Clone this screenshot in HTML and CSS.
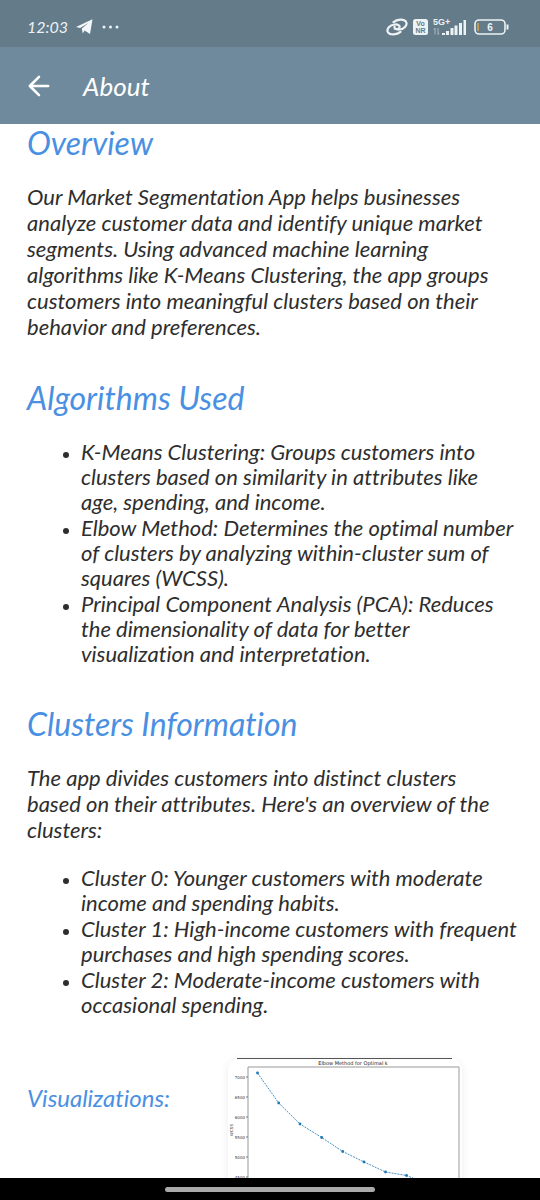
FILE: index.html
```html
<!DOCTYPE html>
<html lang="en">
<head>
<meta charset="utf-8">
<meta name="viewport" content="width=device-width, initial-scale=1">
<title>About</title>
<link rel="stylesheet" href="styles.css">
</head>
<body>
<div class="screen">
  <div class="status-bar">
    <span class="clock">12:03</span>
    <svg class="telegram" width="17" height="16" viewBox="0 0 17 16" aria-hidden="true"><path d="M0 8 16.500 0.300 14 15 8.600 11.500 6.800 14.500 5.800 9.600 12.500 4 4 9Z" fill="#f3f7f9"/></svg>
    <svg class="more" width="17" height="4" viewBox="0 0 17 4" aria-hidden="true"><g fill="#edf2f4"><circle cx="2" cy="2" r="1.500"/><circle cx="8.500" cy="2" r="1.500"/><circle cx="15" cy="2" r="1.500"/></g></svg>
    <div class="indicators">
      <svg width="22" height="18" viewBox="0 0 22 18" aria-hidden="true"><g fill="none" stroke="#edf2f4" stroke-width="2.200" stroke-linecap="round"><path d="M14.500 13.800C11 16.800 4 17.300 2 14.300 0 11 4 7 8.500 6.500 12 6.100 14 7.500 13.500 9.300 13 10.700 10.500 11.200 9 10.800"/><path d="M7.500 4.200C11 1.200 18 .7 20 3.700 22 7 18 11 13.500 11.500 10 11.900 8 10.500 8.500 8.700"/></g></svg>
      <svg width="15" height="16" viewBox="0 0 15 16" aria-hidden="true"><rect width="15" height="16" rx="2.500" fill="#edf2f4"/><g class="vonr" text-anchor="middle"><text x="7.500" y="7.400">Vo</text><text x="7.500" y="13.800">NR</text></g></svg>
      <svg width="34" height="20" viewBox="0 0 34 20" aria-hidden="true"><text class="network" x="0" y="8">5G+</text><g fill="#edf2f4"><path d="M9 16h3v2H9zM13 14h3v4h-3zM17.500 11h3v7h-3zM21.500 8.500h3V18h-3zM26 6h3v12h-3zM30.500 3h2.500v15h-2.500z"/></g><path d="M2 17.500V11L.8 12.500M5 11v6.500L6.200 16" fill="none" stroke="#a9b9c2"/></svg>
      <svg class="battery" width="35" height="16" viewBox="0 0 35 16" aria-hidden="true"><rect x="1" y="1" width="30" height="14" rx="4" fill="none" stroke="#edf2f4" stroke-width="1.600"/><path d="M32.500 5.500h2v5h-2z" fill="#edf2f4"/><path d="M4 4v8" stroke="#c49a4a" stroke-width="2"/><text class="charge" x="16" y="12" text-anchor="middle">6</text></svg>
    </div>
  </div>
  <header class="app-bar">
    <button class="back" type="button" aria-label="Back"><svg width="24" height="24" viewBox="0 0 24 24" aria-hidden="true"><path d="M22 12H2M12 2 2 12 12 22" fill="none" stroke="#fff" stroke-width="2.800" stroke-linecap="round" stroke-linejoin="round"/></svg></button>
    <h1 class="title">About</h1>
  </header>
  <main class="content">
    <section class="section">
      <h2 class="heading">Overview</h2>
      <p class="text">Our Market Segmentation App helps businesses<br>analyze customer data and identify unique market<br>segments. Using advanced machine learning<br>algorithms like K-Means Clustering, the app groups<br>customers into meaningful clusters based on their<br>behavior and preferences.</p>
    </section>
    <section class="section">
      <h2 class="heading">Algorithms Used</h2>
      <ul class="list">
        <li>K-Means Clustering: Groups customers into<br>clusters based on similarity in attributes like<br>age, spending, and income.</li>
        <li>Elbow Method: Determines the optimal number<br>of clusters by analyzing within-cluster sum of<br>squares (WCSS).</li>
        <li>Principal Component Analysis (PCA): Reduces<br>the dimensionality of data for better<br>visualization and interpretation.</li>
      </ul>
    </section>
    <section class="section">
      <h2 class="heading">Clusters Information</h2>
      <p class="text">The app divides customers into distinct clusters<br>based on their attributes. Here's an overview of the<br>clusters:</p>
      <ul class="list">
        <li>Cluster 0: Younger customers with moderate<br>income and spending habits.</li>
        <li>Cluster 1: High-income customers with frequent<br>purchases and high spending scores.</li>
        <li>Cluster 2: Moderate-income customers with<br>occasional spending.</li>
      </ul>
    </section>
    <section class="visuals">
      <h3 class="subheading">Visualizations:</h3>
      <figure class="chart">
        <svg width="234" height="160" viewBox="0 0 234 160" role="img" aria-label="Elbow Method for Optimal k">
          <path d="M9 .5H224" stroke="#555"/>
          <text class="chart-title" x="125" y="7" text-anchor="middle">Elbow Method for Optimal k</text>
          <path d="M20 160V9H231V160" fill="none" stroke="#999"/>
          <path d="M18 19h2M18 39h2M18 59h2M18 79h2M18 99h2M18 119h2" stroke="#777"/>
          <g class="tick" text-anchor="end"><text x="17" y="21">7000</text><text x="17" y="41">6500</text><text x="17" y="61">6000</text><text x="17" y="81">5500</text><text x="17" y="101">5000</text><text x="17" y="121">4500</text></g>
          <text class="tick" text-anchor="middle" transform="translate(5 72) rotate(-90)">WCSS</text>
          <path d="M29.500 15 50.700 45 72 66 93.700 79.500 114.700 93.500 136 104 157.500 114 178.500 117.500 200 126" fill="none" stroke="#4b91c4" stroke-dasharray="2 1"/>
          <g fill="#1f77b4"><circle cx="29.500" cy="15" r="1.400"/><circle cx="50.700" cy="45" r="1.400"/><circle cx="72" cy="66" r="1.400"/><circle cx="93.700" cy="79.500" r="1.400"/><circle cx="114.700" cy="93.500" r="1.400"/><circle cx="136" cy="104" r="1.400"/><circle cx="157.500" cy="114" r="1.400"/><circle cx="178.500" cy="117.500" r="1.400"/></g>
        </svg>
      </figure>
    </section>
  </main>
  <div class="nav-bar"><div class="handle"></div></div>
</div>
</body>
</html>
```
FILE: styles.css
```css
* { box-sizing: border-box; }
body {
  margin: 0;
  background: #fff;
  color: #2e2e2e;
  font-family: Lato, "Open Sans", sans-serif;
  font-style: italic;
  font-variant-ligatures: none;
}
.screen { display: flex; flex-direction: column; height: 100vh; }
.status-bar {
  display: flex;
  align-items: center;
  flex: none;
  padding: 15px 31px 8px 27px;
  background: #647b8a;
  color: #edf2f4;
}
.clock { font-size: 16px; line-height: 24px; }
.telegram { margin-left: 8px; }
.more { margin-left: 9px; }
.indicators { display: flex; align-items: center; gap: 5px; margin-left: auto; }
.battery { margin-left: 2px; }
.vonr { font: bold 7px "Liberation Sans", sans-serif; fill: #647b8a; }
.network { font: bold 9px "Liberation Sans", sans-serif; fill: #edf2f4; }
.charge { font: bold 10px "Liberation Sans", sans-serif; fill: #edf2f4; }
.app-bar {
  display: flex;
  align-items: center;
  flex: none;
  gap: 32px;
  height: 77px;
  padding: 0 27px;
  background: #6f8a9d;
  color: #fff;
}
.back { display: flex; padding: 0; border: 0; background: none; }
.back svg { width: 24px; height: 22px; }
.title { margin: 0; font-size: 26px; font-weight: 400; line-height: 32px; }
.content { flex: 1; min-height: 0; overflow: hidden; padding: 0 27px; }
.section { margin-bottom: 39px; }
.heading {
  margin: 0 0 22px;
  color: #4a90e2;
  font-size: 32px;
  font-weight: 400;
  line-height: 38px;
}
.text { margin: 0; font-size: 22px; line-height: 26px; white-space: nowrap; }
.list {
  display: grid;
  gap: 1px;
  margin: 0;
  padding-left: 54px;
  font-size: 22px;
  line-height: 25px;
  white-space: nowrap;
}
.list li::marker { font-size: 17px; }
.text + .list { margin-top: 22px; }
.visuals { display: flex; align-items: flex-start; justify-content: space-between; padding: 2px 51px 0 0; }
.subheading { margin: 24px 0 0; color: #4a90e2; font-size: 24px; font-weight: 400; line-height: 32px; }
.chart {
  margin: 0;
  border-radius: 12px;
  box-shadow: 0 2px 8px rgba(0, 0, 0, 0.08);
}
.chart svg { display: block; }
.chart-title { font: 5px "DejaVu Sans", sans-serif; fill: #222; }
.tick { font: 4px "DejaVu Sans", sans-serif; fill: #333; }
.nav-bar {
  display: flex;
  align-items: center;
  justify-content: center;
  flex: none;
  height: 22px;
  background: #000;
}
.handle { width: 39%; height: 5px; border-radius: 3px; background: #aaa; }
```
